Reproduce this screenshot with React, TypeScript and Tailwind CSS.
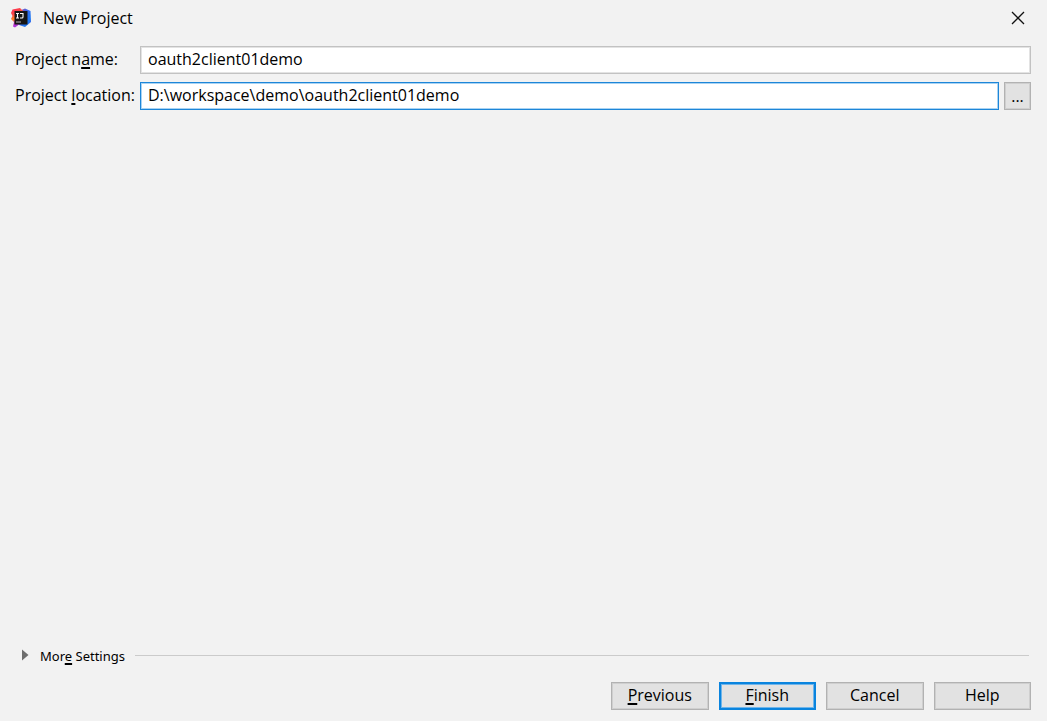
import { useState } from "react";
import type { ReactNode } from "react";

function Mnemonic({ children }: { children: ReactNode }) {
  return (
    <span className="underline decoration-2 underline-offset-2 [text-decoration-skip-ink:none]">
      {children}
    </span>
  );
}

function DialogButton({ primary = false, children }: { primary?: boolean; children: ReactNode }) {
  return (
    <button
      type="button"
      className={`flex h-7 items-center justify-center bg-[#e2e2e2] pb-0.5 ${
        primary
          ? "border-2 border-[#0a84de] outline outline-1 -outline-offset-3 outline-[#6fb5ea]"
          : "border border-[#b2b2b2] outline outline-1 -outline-offset-2 outline-[#cfcfcf]"
      }`}
    >
      <span>{children}</span>
    </button>
  );
}

function AppLogo() {
  return (
    <svg width="20" height="20" viewBox="0 0 20 20" aria-hidden="true">
      <defs>
        <linearGradient id="warm" x1="0" y1="0" x2="0.4" y2="1">
          <stop offset="0" stopColor="#fe2857" />
          <stop offset="0.35" stopColor="#fc4a45" />
          <stop offset="0.58" stopColor="#ff8a1c" />
          <stop offset="0.75" stopColor="#c52bc8" />
          <stop offset="1" stopColor="#a03be0" />
        </linearGradient>
        <linearGradient id="cool" x1="0" y1="0" x2="1" y2="1">
          <stop offset="0" stopColor="#b04a9c" />
          <stop offset="0.4" stopColor="#3b6cf0" />
          <stop offset="0.75" stopColor="#1b78f2" />
          <stop offset="1" stopColor="#5a58e0" />
        </linearGradient>
      </defs>
      <path d="M8 3 14 0.5 19.5 3 20 14 14 19 8 17Z" fill="url(#cool)" />
      <path d="M1.5 1.5 9 0 13 4 10 15 4 19.5 2 18.5 3 14 0 11 1.5 8 0 5Z" fill="url(#warm)" />
      <rect x="3.5" y="3" width="13" height="13.5" fill="#161616" />
      <path
        d="M5 5.5h3M6.5 5.5v4.5M5 10h3M9 5.5h3V9q0 1-1 1H9"
        fill="none"
        stroke="#fff"
        strokeWidth="1.1"
      />
      <path d="M5 14h5" stroke="#b8b8b8" strokeWidth="1" />
    </svg>
  );
}

export default function App() {
  const [name, setName] = useState("oauth2client01demo");
  const [location, setLocation] = useState("D:\\workspace\\demo\\oauth2client01demo");

  return (
    <div
      role="dialog"
      aria-labelledby="dialog-title"
      className="flex min-h-screen flex-col bg-[#f2f2f2] font-['Open_Sans','Noto_Sans',sans-serif] text-base leading-5 text-black"
    >
      <header className="flex h-9 items-center justify-between pr-[19px] pl-[11px]">
        <div className="flex items-center gap-3">
          <AppLogo />
          <h1 id="dialog-title">New Project</h1>
        </div>
        <button type="button" aria-label="Close" className="flex size-5 items-center justify-center">
          <svg width="14" height="14" viewBox="0 0 14 14" aria-hidden="true">
            <path d="M1 1 13 13M13 1 1 13" stroke="#111" strokeWidth="1.3" fill="none" />
          </svg>
        </button>
      </header>

      <main className="flex grow flex-col pt-2.5 pr-4 pb-[11px] pl-[15px]">
        <div className="grid grid-cols-[125px_1fr] items-center gap-y-2">
          <label htmlFor="project-name" className="pb-0.5 whitespace-nowrap">
            Project n<Mnemonic>a</Mnemonic>me:
          </label>
          <input
            id="project-name"
            value={name}
            onChange={(e) => setName(e.target.value)}
            className="h-7 w-full border border-[#c2c2c2] bg-white px-[7px] pb-0.5 outline outline-1 -outline-offset-2 outline-[#e3e3e3]"
          />
          <label htmlFor="project-location" className="pb-0.5 whitespace-nowrap">
            Project <Mnemonic>l</Mnemonic>ocation:
          </label>
          <div className="flex gap-[5px]">
            <input
              id="project-location"
              value={location}
              onChange={(e) => setLocation(e.target.value)}
              className="h-7 min-w-0 grow border border-[#1d86d8] bg-white px-[7px] pb-0.5 outline outline-1 -outline-offset-2 outline-[#a9d3f3]"
            />
            <button
              type="button"
              aria-label="Browse"
              className="flex h-7 w-[27px] items-center justify-center border border-[#b2b2b2] bg-[#e2e2e2] outline outline-1 -outline-offset-2 outline-[#cfcfcf]"
            >
              ...
            </button>
          </div>
        </div>

        <div className="mt-auto flex items-center pr-0.5 pl-1.5">
          <button
            type="button"
            aria-expanded="false"
            className="flex items-center gap-[11px] font-['Noto_Sans','Open_Sans',sans-serif] text-[13px]"
          >
            <svg width="8" height="12" viewBox="0 0 8 12" aria-hidden="true" className="mb-0.5">
              <path d="M1 0.5 7.5 6 1 11.5Z" fill="#6e6e6e" />
            </svg>
            <span>
              Mor<Mnemonic>e</Mnemonic> Settings
            </span>
          </button>
          <div className="mb-0.5 ml-2.5 h-px grow bg-[#cbcbcb]" />
        </div>

        <footer className="mt-4 grid w-[420px] grid-cols-4 gap-2.5 self-end">
          <DialogButton>
            <Mnemonic>P</Mnemonic>revious
          </DialogButton>
          <DialogButton primary>
            <Mnemonic>F</Mnemonic>inish
          </DialogButton>
          <DialogButton>Cancel</DialogButton>
          <DialogButton>Help</DialogButton>
        </footer>
      </main>
    </div>
  );
}
